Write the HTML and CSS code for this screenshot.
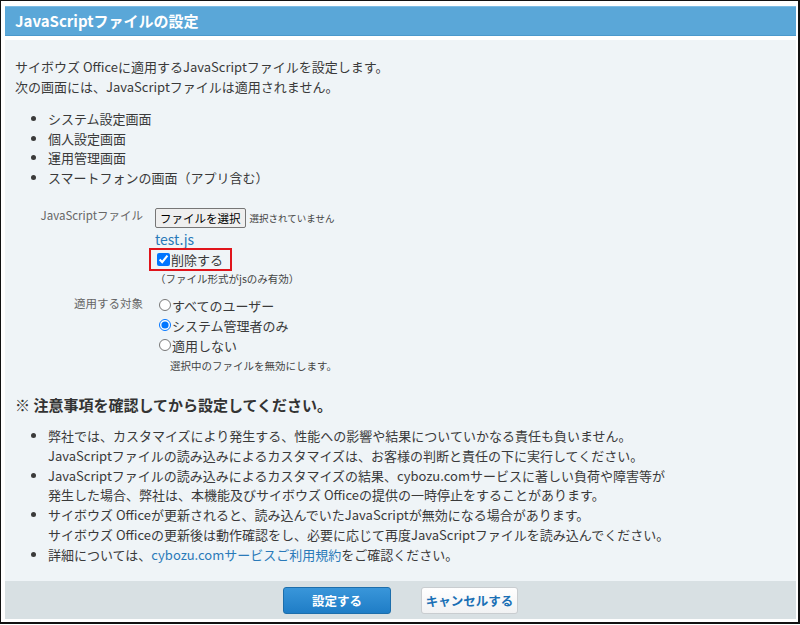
FILE: index.html
```html
<!DOCTYPE html>
<html lang="ja">
<head>
    <meta charset="UTF-8">
    <meta name="viewport" content="width=device-width, initial-scale=1.0">
    <title>JavaScriptファイルの設定</title>
    <link rel="stylesheet" href="styles.css">
</head>
<body>
<div class="frame">
    <div class="panel">
        <h1 class="panel-title">JavaScriptファイルの設定</h1>
        <div class="panel-body">
            <p class="intro">サイボウズ Officeに適用するJavaScriptファイルを設定します。<br>次の画面には、JavaScriptファイルは適用されません。</p>
            <ul class="screen-list">
                <li>システム設定画面</li>
                <li>個人設定画面</li>
                <li>運用管理画面</li>
                <li>スマートフォンの画面（アプリ含む）</li>
            </ul>

            <div class="form-grid">
                <div class="form-label label-file">JavaScriptファイル</div>
                <div class="form-value">
                    <div class="file-line">
                        <button class="file-button" type="button">ファイルを選択</button>
                        <span class="file-status">選択されていません</span>
                    </div>
                    <a class="file-link" href="#">test.js</a>
                    <label class="delete-box"><input type="checkbox" checked>削除する</label>
                    <div class="hint">（ファイル形式がjsのみ有効）</div>
                </div>

                <div class="form-label label-target">適用する対象</div>
                <div class="form-value">
                    <label class="radio-line"><input type="radio" name="target">すべてのユーザー</label>
                    <label class="radio-line"><input type="radio" name="target" checked>システム管理者のみ</label>
                    <label class="radio-line"><input type="radio" name="target">適用しない</label>
                    <div class="hint hint-indent">選択中のファイルを無効にします。</div>
                </div>
            </div>

            <h2 class="notice-title">※ 注意事項を確認してから設定してください。</h2>
            <ul class="notice-list">
                <li>弊社では、カスタマイズにより発生する、性能への影響や結果についていかなる責任も負いません。<br>JavaScriptファイルの読み込みによるカスタマイズは、お客様の判断と責任の下に実行してください。</li>
                <li>JavaScriptファイルの読み込みによるカスタマイズの結果、cybozu.comサービスに著しい負荷や障害等が<br>発生した場合、弊社は、本機能及びサイボウズ Officeの提供の一時停止をすることがあります。</li>
                <li>サイボウズ Officeが更新されると、読み込んでいたJavaScriptが無効になる場合があります。<br>サイボウズ Officeの更新後は動作確認をし、必要に応じて再度JavaScriptファイルを読み込んでください。</li>
                <li>詳細については、<a href="#">cybozu.comサービスご利用規約</a>をご確認ください。</li>
            </ul>
        </div>
        <div class="panel-footer">
            <button class="btn btn-primary" type="button">設定する</button>
            <button class="btn btn-cancel" type="button">キャンセルする</button>
        </div>
    </div>
</div>
</body>
</html>
```

FILE: styles.css
```css
html, body {
    margin: 0;
    padding: 0;
    background: #fff;
}
body {
    font-family: "Noto Sans CJK JP", "Noto Sans", sans-serif;
    color: #3a3a3a;
    font-size: 13px;
}
.frame {
    box-sizing: border-box;
    width: 800px;
    height: 624px;
    border-style: solid;
    border-color: #111;
    border-width: 1px 2px 2px 1px;
    padding: 5px 2px 3px 4px;
}
.panel {
    display: flex;
    flex-direction: column;
    height: 100%;
}
.panel-title {
    margin: 0 0 4px;
    height: 30px;
    box-sizing: border-box;
    padding-left: 10px;
    background: #5aa7d8;
    border-top: 1px solid #7dbbe3;
    border-bottom: 1px solid #4b99cc;
    color: #fff;
    font-size: 15px;
    font-weight: bold;
    line-height: 28px;
}
.panel-body {
    flex: 1;
    background: #eff4f7;
    padding: 17px 10px 0;
}
.intro {
    margin: 0;
    line-height: 19.5px;
}
.screen-list {
    margin: 13px 0 0;
    padding-left: 33px;
    line-height: 19.5px;
}

/* form rows */
.form-grid {
    display: grid;
    grid-template-columns: 128px 1fr;
    column-gap: 12px;
    row-gap: 8px;
    margin-top: 21px;
}
.form-label {
    text-align: right;
    color: #666;
    font-size: 11.5px;
    line-height: 16px;
}
.label-file {
    margin-top: -1px;
}
.form-value {
    display: flex;
    flex-direction: column;
    align-items: flex-start;
}
.file-line {
    display: flex;
    align-items: center;
    height: 20px;
}
.file-button {
    height: 20px;
    box-sizing: border-box;
    padding: 0 4px;
    border: 1px solid #767676;
    border-radius: 2px;
    background: #efefef;
    color: #000;
    font-family: inherit;
    font-size: 11.5px;
    line-height: 17px;
}
.file-status {
    margin-left: 4px;
    font-size: 9.5px;
    color: #444;
}
.file-link {
    margin-top: 2px;
    font-size: 14px;
    line-height: 18px;
    color: #2a7ab9;
    text-decoration: none;
}
.delete-box {
    display: flex;
    align-items: center;
    margin-left: -6px;
    height: 23px;
    box-sizing: border-box;
    padding: 0 7px 0 6px;
    border: 2px solid #e0141b;
    line-height: 19px;
}
.delete-box input {
    width: 13px;
    height: 13px;
    margin: 0 1px 0 0;
}
.hint {
    font-size: 10.5px;
    line-height: 16px;
    color: #444;
}
.hint-indent {
    margin-top: 3px;
    padding-left: 15px;
}
.radio-line {
    display: flex;
    align-items: center;
    height: 20px;
}
.radio-line input {
    width: 12px;
    height: 12px;
    margin: 0 1px 0 4px;
}

/* notes */
.notice-title {
    margin: 21px 0 0;
    font-size: 15px;
    line-height: 20px;
    font-weight: bold;
    color: #333;
}
.notice-list {
    margin: 11px 0 0;
    padding-left: 33px;
    line-height: 19.8px;
}
.notice-list a {
    color: #2a7ab9;
    text-decoration: none;
}

/* footer */
.panel-footer {
    display: flex;
    justify-content: center;
    align-items: center;
    gap: 30px;
    height: 38px;
    background: #d8e0e3;
}
.btn {
    height: 27px;
    box-sizing: border-box;
    padding: 0;
    border-radius: 3px;
    font-family: inherit;
    font-size: 12.5px;
    font-weight: bold;
    white-space: nowrap;
    cursor: pointer;
}
.btn-primary {
    width: 108px;
    border: 1px solid #1d6eab;
    background: linear-gradient(#3996da, #1f7dc6);
    color: #fff;
}
.btn-cancel {
    width: 97px;
    border: 1px solid #c9cdd0;
    background: linear-gradient(#ffffff, #f1f2f3);
    color: #1a70b5;
}
```
